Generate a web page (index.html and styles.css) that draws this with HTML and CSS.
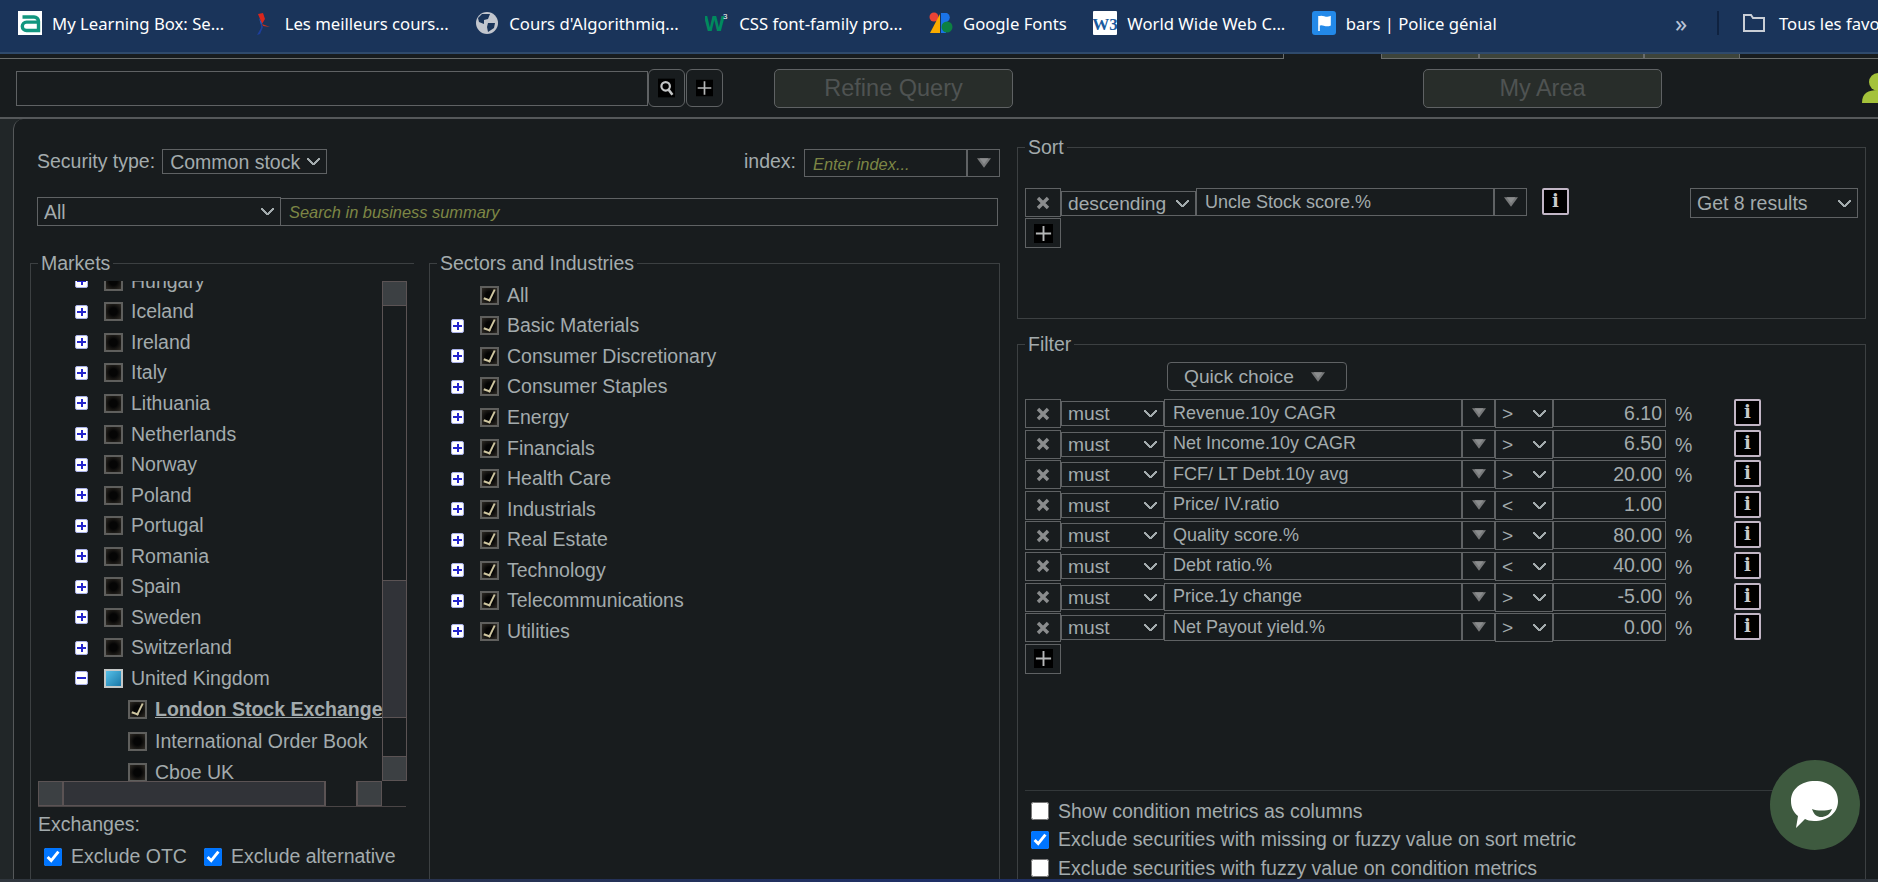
FILE: index.html
```html
<!DOCTYPE html>
<html lang="en">
<head>
    <meta charset="UTF-8">
    <title>Stock screener</title>
    <link rel="stylesheet" href="styles.css">
</head>
<body>
    <svg class="defs" width="0" height="0">
        <symbol id="arrow" viewBox="0 0 16 11"><polygon points="0,0 16,0 8,11" fill="#77797a"/><polygon points="3,0 13,0 8,7" fill="#8b8d8e"/></symbol>
        <symbol id="cross" viewBox="0 0 14 14"><path d="M2 2 L12 12 M12 2 L2 12" stroke="#8a8c8d" stroke-width="3.4" fill="none"/></symbol>
        <symbol id="plus" viewBox="0 0 20 20"><rect width="20" height="20" fill="#000"/><path d="M10 2 V18 M2 10 H18" stroke="#b5b7b8" stroke-width="2" fill="none"/></symbol>
    </svg>

    <div class="bookmarks">
        <a class="bm"><svg class="fav" viewBox="0 0 24 24"><rect width="24" height="24" fill="#fff"/><path d="M4.5 6 H16 a4.5 4.5 0 0 1 4.5 4.5 V19.5 H8.5 a4.2 4.2 0 0 1 0-8.4 H20" stroke="#12967f" stroke-width="3.4" fill="none"/></svg>My Learning Box: Se...</a>
        <a class="bm"><svg class="fav" viewBox="0 0 24 24"><path d="M7 3 L12 2 L14 8 L11 13 Z" fill="#d8261c"/><path d="M11 13 L19 16 L12 15 Z" fill="#c8301e"/><path d="M10 12 L12 16 L9 23 L6 24 L10 17 Z" fill="#1d3f9c"/><path d="M8 7 L11 12 L10 14 Z" fill="#2c5bc0"/></svg>Les meilleurs cours...</a>
        <a class="bm"><svg class="fav" viewBox="0 0 24 24"><circle cx="12" cy="12" r="11" fill="#c2c6ce"/><path d="M7 3 L15 3 L13 8 L9 9 L9 13 L4 11 L3 7 Z M13 12 L20 12 L19 17 L13 21 L12 16 Z" fill="#1a3459"/></svg>Cours d'Algorithmiq...</a>
        <a class="bm"><svg class="fav" viewBox="0 0 24 24"><text class="w3s" x="-1" y="20">W</text><text class="w3s-sup" x="18" y="8">3</text></svg>CSS font-family pro...</a>
        <a class="bm"><svg class="fav" viewBox="0 0 24 24"><circle cx="5" cy="6" r="4.5" fill="#ea4335"/><polygon points="1,22 11,3 11,22" fill="#f9ab00"/><rect x="12" y="2" width="5" height="20" fill="#1a73e8"/><path d="M12 2 h6 a5 5 0 0 1 0 9 h-6 Z" fill="#1a73e8"/><circle cx="18" cy="16" r="5.5" fill="#0d8043"/></svg>Google Fonts</a>
        <a class="bm"><svg class="fav" viewBox="0 0 24 24"><rect width="24" height="24" rx="1" fill="#fff"/><text class="w3c" x="12" y="19" text-anchor="middle">W3</text></svg>World Wide Web C...</a>
        <a class="bm"><svg class="fav" viewBox="0 0 24 24"><rect width="24" height="24" rx="3" fill="#2389e9"/><path d="M7 5 V20 M7 6 C11 4 13 8 18 6 V14 C13 16 11 12 7 14 Z" stroke="#fff" stroke-width="1.6" fill="#fff"/></svg>bars | Police génial</a>
        <div class="bm-end">
            <span class="more">»</span>
            <span class="bm-sep"></span>
            <svg class="folder" viewBox="0 0 24 22"><path d="M2 19 V3 H9 L11 6 H22 V19 Z" fill="none" stroke="#c9ced6" stroke-width="2"/></svg>
            <span class="all">Tous les favoris</span>
        </div>
    </div>

    <div class="tabs">
        <span class="tab-line"></span>
        <span class="tab-active"></span>
        <span class="tab tab-a"></span>
        <span class="tab tab-b"></span>
        <span class="tab tab-c"></span>
        <span class="tab-rest"></span>
    </div>

    <div class="header">
        <input class="top-search" type="text">
        <button class="icon-btn"><svg class="glyph" viewBox="0 0 20 22"><rect width="20" height="22" fill="#000"/><circle cx="9" cy="9" r="5" fill="none" stroke="#c3c5c6" stroke-width="2.6"/><path d="M12.5 13 L17 19" stroke="#c3c5c6" stroke-width="3"/></svg></button>
        <button class="icon-btn"><svg class="glyph" viewBox="0 0 20 20"><use href="#plus"/></svg></button>
        <button class="big-btn refine">Refine Query</button>
        <button class="big-btn area">My Area</button>
        <svg class="user" viewBox="0 0 40 30"><circle cx="16" cy="9" r="9" fill="#a4c23a"/><path d="M0 30 C0 20 6 17 16 17 C26 17 32 20 32 30 Z" fill="#a4c23a"/></svg>
    </div>

    <div class="main">
        <div class="panel">
            <div class="left">
                <div class="type-row">
                    <label>Security type:</label>
                    <select class="sel type-sel"><option>Common stock</option></select>
                    <label class="index-label">index:</label>
                    <input class="field index-field" type="text" placeholder="Enter index...">
                    <button class="drop"><svg class="tri"><use href="#arrow"/></svg></button>
                </div>
                <div class="summary-row">
                    <select class="sel all-sel"><option>All</option></select>
                    <input class="field summary-field" type="text" placeholder="Search in business summary">
                </div>
                <div class="columns">
                    <fieldset class="markets">
                        <legend>Markets</legend>
                        <div class="tree-box">
                            <div class="tree-view">
                                <ul class="tree">
                                    <li class="node"><span class="pm"></span><span class="cb"></span>Hungary</li>
                                    <li class="node"><span class="pm"></span><span class="cb"></span>Iceland</li>
                                    <li class="node"><span class="pm"></span><span class="cb"></span>Ireland</li>
                                    <li class="node"><span class="pm"></span><span class="cb"></span>Italy</li>
                                    <li class="node"><span class="pm"></span><span class="cb"></span>Lithuania</li>
                                    <li class="node"><span class="pm"></span><span class="cb"></span>Netherlands</li>
                                    <li class="node"><span class="pm"></span><span class="cb"></span>Norway</li>
                                    <li class="node"><span class="pm"></span><span class="cb"></span>Poland</li>
                                    <li class="node"><span class="pm"></span><span class="cb"></span>Portugal</li>
                                    <li class="node"><span class="pm"></span><span class="cb"></span>Romania</li>
                                    <li class="node"><span class="pm"></span><span class="cb"></span>Spain</li>
                                    <li class="node"><span class="pm"></span><span class="cb"></span>Sweden</li>
                                    <li class="node"><span class="pm"></span><span class="cb"></span>Switzerland</li>
                                    <li class="node"><span class="pm minus"></span><span class="cb part"></span>United Kingdom</li>
                                    <li class="node child"><span class="cb on"></span><b>London Stock Exchange</b></li>
                                    <li class="node child"><span class="cb"></span>International Order Book</li>
                                    <li class="node child"><span class="cb"></span>Cboe UK</li>
                                </ul>
                            </div>
                            <div class="vbar">
                                <span class="sb-btn sb-up"></span>
                                <span class="sb-track sb-t1"></span>
                                <span class="sb-thumb sb-t2"></span>
                                <span class="sb-track sb-t3"></span>
                                <span class="sb-btn sb-down"></span>
                            </div>
                        </div>
                        <div class="hbar">
                            <span class="sb-btn sb-left"></span>
                            <span class="sb-thumb sb-h1"></span>
                            <span class="sb-track sb-h2"></span>
                            <span class="sb-btn sb-right"></span>
                        </div>
                        <div class="exchanges">Exchanges:</div>
                        <div class="exclude">
                            <label class="chk"><input type="checkbox" checked>Exclude OTC</label>
                            <label class="chk"><input type="checkbox" checked>Exclude alternative</label>
                        </div>
                        <div class="cut-line"></div>
                    </fieldset>
                    <fieldset class="sectors">
                        <legend>Sectors and Industries</legend>
                        <ul class="tree sector-tree">
                            <li class="node"><span class="pm none"></span><span class="cb on"></span>All</li>
                            <li class="node"><span class="pm"></span><span class="cb on"></span>Basic Materials</li>
                            <li class="node"><span class="pm"></span><span class="cb on"></span>Consumer Discretionary</li>
                            <li class="node"><span class="pm"></span><span class="cb on"></span>Consumer Staples</li>
                            <li class="node"><span class="pm"></span><span class="cb on"></span>Energy</li>
                            <li class="node"><span class="pm"></span><span class="cb on"></span>Financials</li>
                            <li class="node"><span class="pm"></span><span class="cb on"></span>Health Care</li>
                            <li class="node"><span class="pm"></span><span class="cb on"></span>Industrials</li>
                            <li class="node"><span class="pm"></span><span class="cb on"></span>Real Estate</li>
                            <li class="node"><span class="pm"></span><span class="cb on"></span>Technology</li>
                            <li class="node"><span class="pm"></span><span class="cb on"></span>Telecommunications</li>
                            <li class="node"><span class="pm"></span><span class="cb on"></span>Utilities</li>
                        </ul>
                    </fieldset>
                </div>
            </div>

            <div class="right">
                <fieldset class="sort">
                    <legend>Sort</legend>
                    <div class="sort-row">
                        <button class="row-btn"><svg class="x"><use href="#cross"/></svg></button>
                        <select class="sel dir-sel"><option>descending</option></select>
                        <input class="metric sort-metric" type="text" value="Uncle Stock score.%">
                        <button class="drop"><svg class="tri"><use href="#arrow"/></svg></button>
                        <span class="info">i</span>
                        <select class="sel get-sel"><option>Get 8 results</option></select>
                    </div>
                    <button class="row-btn add"><svg class="add-glyph"><use href="#plus"/></svg></button>
                </fieldset>

                <fieldset class="filter">
                    <legend>Filter</legend>
                    <button class="quick">Quick choice<svg class="tri"><use href="#arrow"/></svg></button>
                    <div class="rules">
                        <div class="rule">
                            <button class="row-btn"><svg class="x"><use href="#cross"/></svg></button>
                            <select class="sel must"><option>must</option></select>
                            <input class="metric" type="text" value="Revenue.10y CAGR">
                            <button class="drop"><svg class="tri"><use href="#arrow"/></svg></button>
                            <select class="sel op"><option>&gt;</option></select>
                            <input class="val" type="text" value="6.10">
                            <span class="unit">%</span>
                            <span class="info">i</span>
                        </div>
                        <div class="rule">
                            <button class="row-btn"><svg class="x"><use href="#cross"/></svg></button>
                            <select class="sel must"><option>must</option></select>
                            <input class="metric" type="text" value="Net Income.10y CAGR">
                            <button class="drop"><svg class="tri"><use href="#arrow"/></svg></button>
                            <select class="sel op"><option>&gt;</option></select>
                            <input class="val" type="text" value="6.50">
                            <span class="unit">%</span>
                            <span class="info">i</span>
                        </div>
                        <div class="rule">
                            <button class="row-btn"><svg class="x"><use href="#cross"/></svg></button>
                            <select class="sel must"><option>must</option></select>
                            <input class="metric" type="text" value="FCF/ LT Debt.10y avg">
                            <button class="drop"><svg class="tri"><use href="#arrow"/></svg></button>
                            <select class="sel op"><option>&gt;</option></select>
                            <input class="val" type="text" value="20.00">
                            <span class="unit">%</span>
                            <span class="info">i</span>
                        </div>
                        <div class="rule">
                            <button class="row-btn"><svg class="x"><use href="#cross"/></svg></button>
                            <select class="sel must"><option>must</option></select>
                            <input class="metric" type="text" value="Price/ IV.ratio">
                            <button class="drop"><svg class="tri"><use href="#arrow"/></svg></button>
                            <select class="sel op"><option>&lt;</option></select>
                            <input class="val" type="text" value="1.00">
                            <span class="unit"></span>
                            <span class="info">i</span>
                        </div>
                        <div class="rule">
                            <button class="row-btn"><svg class="x"><use href="#cross"/></svg></button>
                            <select class="sel must"><option>must</option></select>
                            <input class="metric" type="text" value="Quality score.%">
                            <button class="drop"><svg class="tri"><use href="#arrow"/></svg></button>
                            <select class="sel op"><option>&gt;</option></select>
                            <input class="val" type="text" value="80.00">
                            <span class="unit">%</span>
                            <span class="info">i</span>
                        </div>
                        <div class="rule">
                            <button class="row-btn"><svg class="x"><use href="#cross"/></svg></button>
                            <select class="sel must"><option>must</option></select>
                            <input class="metric" type="text" value="Debt ratio.%">
                            <button class="drop"><svg class="tri"><use href="#arrow"/></svg></button>
                            <select class="sel op"><option>&lt;</option></select>
                            <input class="val" type="text" value="40.00">
                            <span class="unit">%</span>
                            <span class="info">i</span>
                        </div>
                        <div class="rule">
                            <button class="row-btn"><svg class="x"><use href="#cross"/></svg></button>
                            <select class="sel must"><option>must</option></select>
                            <input class="metric" type="text" value="Price.1y change">
                            <button class="drop"><svg class="tri"><use href="#arrow"/></svg></button>
                            <select class="sel op"><option>&gt;</option></select>
                            <input class="val" type="text" value="-5.00">
                            <span class="unit">%</span>
                            <span class="info">i</span>
                        </div>
                        <div class="rule">
                            <button class="row-btn"><svg class="x"><use href="#cross"/></svg></button>
                            <select class="sel must"><option>must</option></select>
                            <input class="metric" type="text" value="Net Payout yield.%">
                            <button class="drop"><svg class="tri"><use href="#arrow"/></svg></button>
                            <select class="sel op"><option>&gt;</option></select>
                            <input class="val" type="text" value="0.00">
                            <span class="unit">%</span>
                            <span class="info">i</span>
                        </div>
                    </div>
                    <button class="row-btn add"><svg class="add-glyph"><use href="#plus"/></svg></button>
                    <div class="options">
                        <label class="chk"><input type="checkbox">Show condition metrics as columns</label>
                        <label class="chk"><input type="checkbox" checked>Exclude securities with missing or fuzzy value on sort metric</label>
                        <label class="chk"><input type="checkbox">Exclude securities with fuzzy value on condition metrics</label>
                    </div>
                </fieldset>
            </div>
        </div>
    </div>
    <div class="taskbar"></div>

    <div class="chat">
        <svg viewBox="0 0 50 50" class="chat-icon"><path d="M25 1 C39 1 48 9 48 21 C48 33 38 41 24 41 C20 41 17 40 15 39 L6 48 L8 36 C3 32 1 27 1 21 C1 9 11 1 25 1 Z" fill="#fff"/><path d="M22 29 C27 31 36 31 42 29 C40 35 35 37 31 37 C27 37 24 35 22 29 Z" fill="#3e5a3f"/></svg>
    </div>
</body>
</html>
```

FILE: styles.css
```css
* { box-sizing: border-box; }
html, body { margin: 0; height: 882px; overflow: hidden; }
body { background: #181c1e; color: #a3abad; font-family: "Liberation Sans", Arial, sans-serif; font-size: 19.5px; position: relative; }
.defs { display: block; height: 0; }
ul { list-style: none; margin: 0; padding: 0; }
button { font-family: inherit; padding: 0; cursor: pointer; }

/* browser bookmarks */
.bookmarks { height: 52px; background: #1a345a; display: flex; align-items: center; gap: 26.5px; padding: 0 0 6px 18px; color: #fff; font-family: "Noto Sans", sans-serif; font-size: 16.7px; white-space: nowrap; }
.bm { display: flex; align-items: center; gap: 10px; }
.fav { width: 24px; height: 24px; flex: none; }
.w3s { font: bold 22px "Liberation Sans", sans-serif; fill: #008a5e; }
.w3s-sup { font: 8px "Liberation Sans", sans-serif; fill: #fff; }
.w3c { font: bold 17px "Liberation Serif", serif; fill: #1a5a9c; }
.bm-end { margin-left: auto; display: flex; align-items: center; width: 203px; overflow: hidden; flex: none; }
.bm-end > * { flex: none; }
.more { color: #b9c3d6; font-size: 24px; width: 42px; line-height: 20px; }
.bm-sep { width: 2px; height: 24px; background: #0f2240; margin-right: 23px; }
.folder { width: 24px; height: 22px; margin-right: 13px; }

/* tab strip */
.tabs { height: 7px; display: flex; background: #181c1e; border-top: 2px solid #2f4a6c; }
.tab-line { width: 1284px; border-bottom: 1px solid #6a6d6c; border-right: 1px solid #6a6d6c; }
.tab-active { width: 97px; }
.tab { background: #3e443a; border: 1px solid #6a6d6c; border-top: none; }
.tab-a { width: 98px; }
.tab-b { width: 165px; }
.tab-c { width: 96px; }
.tab-rest { flex: 1; border-bottom: 1px solid #6a6d6c; }

/* search header */
.header { height: 60px; display: flex; align-items: center; padding-left: 16px; border-bottom: 2px solid #55585a; overflow: hidden; }
.header > * { flex: none; }
.top-search { width: 632px; height: 35px; background: #181c1e; border: 1px solid #5f6264; }
.icon-btn { width: 37px; height: 38px; margin-right: 1px; background: #181c1e; border: 1px solid #5f6264; border-radius: 6px; display: flex; align-items: center; justify-content: center; }
.glyph { width: 17px; height: 20px; }
.big-btn { height: 39px; width: 239px; background: #282d2a; border: 1px solid #5f6264; border-radius: 5px; color: #4f5352; font-size: 23.5px; }
.refine { margin-left: 50px; }
.area { margin-left: 410px; }
.user { width: 40px; height: 30px; margin-left: 200px; }

/* page panel */
.main { height: 760px; background: #212628; padding-left: 13px; overflow: hidden; }
.panel { height: 800px; background: #181c1e; border-left: 1px solid #55585a; border-top-left-radius: 10px; display: flex; }
.left { width: 987px; padding: 30px 0 0 23px; flex: none; }
.right { width: 849px; margin-left: 16px; padding-top: 17px; flex: none; }
.taskbar { height: 3px; background: linear-gradient(90deg, #30363d 0, #1e2f66 50%, #30363d 100%); }

/* selects with the thin chevron of the original */
.sel { appearance: none; color: #a3abad; border: 1px solid #5f6264; font: inherit; padding: 0 0 0 6px; border-radius: 0; background-color: #181c1e;
    background-image: linear-gradient(45deg, transparent 42%, #a3abad 42%, #a3abad 62%, transparent 62%), linear-gradient(-45deg, transparent 42%, #a3abad 42%, #a3abad 62%, transparent 62%);
    background-size: 7px 7px, 7px 7px;
    background-position: right 12px center, right 6px center;
    background-repeat: no-repeat; }
.field { background: #181c1e; color: #a3abad; border: 1px solid #5f6264; font: inherit; }
.field::placeholder { color: #7d8645; font-style: italic; font-size: 16.4px; opacity: 1; }

.type-row { display: flex; align-items: center; height: 28px; width: 963px; }
.type-row label { margin-right: 7px; margin-top: -3px; }
.type-sel { width: 165px; height: 25px; flex: none; margin-top: -3px; padding-left: 7px; }
.type-row .index-label { margin-left: auto; margin-right: 8px; }
.index-field { width: 163px; height: 28px; padding-left: 8px; flex: none; }
.drop { width: 33px; height: 28px; flex: none; background: #181c1e; border: 1px solid #5f6264; display: flex; align-items: center; justify-content: center; }
.tri { width: 14px; height: 10px; flex: none; }
.summary-row { display: flex; align-items: center; margin-top: 20px; width: 961px; }
.all-sel { width: 244px; height: 29px; flex: none; }
.summary-field { flex: 1; height: 28px; padding-left: 8px; border-left: none; }

/* market and sector groups */
fieldset { margin: 0; padding: 0; min-width: 0; border: 1px solid #3c4042; }
legend { padding: 0 3px; line-height: 22px; }
.columns { display: flex; gap: 15px; margin: 26px 0 0 -7px; height: 640px; }
.markets { width: 384px; padding-left: 7px; border-right: none; border-bottom: none; flex: none; }
.sectors { width: 571px; padding-left: 7px; flex: none; }
.tree-box { display: flex; margin-top: 7px; width: 368px; height: 500px; }
.tree-view { width: 344px; overflow: hidden; flex: none; }
.tree { margin-top: -15px; }
.node { height: 30.55px; display: flex; align-items: center; white-space: nowrap; padding-left: 37px; }
.child { height: 31.6px; padding-left: 90px; }
.child b { text-decoration: underline; }
.sector-tree { margin-top: 6px; }
.sector-tree .node { padding-left: 14px; }
.pm { width: 13px; height: 14px; margin-right: 16px; flex: none; border: 1px solid #aab2ea; border-radius: 2px; background: linear-gradient(#2424cc, #2424cc) center / 9px 2px no-repeat, linear-gradient(#2424cc, #2424cc) center / 2px 8px no-repeat, #fff; }
.pm.minus { background: linear-gradient(#2424cc, #2424cc) center / 9px 2px no-repeat, #fff; }
.pm.none { visibility: hidden; }
.cb { width: 19px; height: 19px; margin-right: 8px; flex: none; border: 2px solid #5f5f5d; background: radial-gradient(circle, #050505 35%, #302c26 100%); display: flex; align-items: center; justify-content: center; }
.cb.on::after { content: ""; width: 5px; height: 11px; margin-top: -2px; border-right: 2px solid #cfc6a0; border-bottom: 2px solid #cfc6a0; transform: rotate(20deg) skewX(-6deg); }
.cb.part { border: 2px solid #c4c8c8; background: linear-gradient(135deg, #56c0e8, #1a78a8); }

/* fake scrollbars of the tree */
.vbar { width: 25px; height: 500px; display: flex; flex-direction: column; flex: none; }
.hbar { width: 368px; height: 26px; display: flex; border-bottom: 1px solid #4a4546; }
.sb-btn { background: #3c4043; border: 1px solid #5b5354; flex: none; }
.sb-thumb { background: #313338; border: 1px solid #5b5354; flex: none; }
.sb-track { border: 1px solid #5b5354; border-width: 0 1px; flex: none; }
.sb-up { height: 25px; }
.sb-t1 { height: 274px; }
.sb-t2 { height: 138px; }
.sb-t3 { height: 38px; }
.sb-down { height: 25px; }
.sb-left { width: 25px; }
.sb-h1 { width: 262px; }
.sb-h2 { width: 32px; }
.sb-right { width: 25px; }

.exchanges { line-height: 22px; margin-top: 6px; }
.exclude { display: flex; align-items: center; gap: 17px; margin: 10px 0 0 6px; }
.chk { display: flex; align-items: center; white-space: nowrap; }
.chk input { width: 18px; height: 18px; margin: 0 9px 0 0; flex: none; }
.cut-line { width: 231px; height: 1px; background: #5f6264; margin-top: 11px; }

/* sort and filter */
.sort { height: 183px; padding: 30px 7px 0 7px; }
.sort-row { display: flex; align-items: flex-start; height: 30px; }
.row-btn { width: 36px; height: 29px; flex: none; background: #181c1e; border: 1px solid #5f6264; display: flex; align-items: center; justify-content: center; }
.x { width: 14px; height: 14px; }
.add { height: 30px; }
.add-glyph { width: 19px; height: 19px; }
.dir-sel { width: 135px; height: 25px; margin-top: 3px; flex: none; font-size: 19.2px; }
.metric { width: 298px; height: 28px; flex: none; background: #181c1e; color: #a3abad; border: 1px solid #5f6264; font: 18px "Liberation Sans", sans-serif; padding: 0 8px; }
.info { width: 27px; height: 27px; margin-left: 15px; flex: none; background: #000; border: 2px solid #c2b6c6; border-radius: 2px; color: #c9cbcc; font: bold 18px/22px "DejaVu Serif", serif; text-align: center; }
.get-sel { width: 168px; height: 30px; margin-left: auto; flex: none; }

.filter { margin-top: 14px; height: 600px; padding: 0 7px; }
.quick { display: flex; align-items: center; gap: 17px; width: 180px; height: 29px; margin: 7px 0 8px 142px; padding-left: 16px; background: #181c1e; border: 1px solid #5f6264; border-radius: 4px; color: #a3abad; font-size: 19.2px; }
.rule { height: 30.6px; display: flex; align-items: flex-start; }
.must { width: 103px; height: 25px; margin-top: 2px; flex: none; font-size: 19.2px; }
.op { width: 58px; height: 29px; flex: none; font-size: 19.2px; }
.val { width: 113px; height: 28px; flex: none; background: #181c1e; color: #a3abad; border: 1px solid #5f6264; font: 19.5px "Liberation Sans", sans-serif; text-align: right; padding: 0 3px 0 4px; }
.unit { width: 68px; padding-left: 9px; line-height: 30px; flex: none; }
.rule .info { margin-left: 0; }
.options { margin-top: 116px; border-top: 1px solid #33383a; padding-top: 6px; }
.options .chk { height: 28.6px; margin-left: 6px; }

/* chat bubble */
.chat { position: absolute; left: 1770px; top: 760px; width: 90px; height: 90px; border-radius: 50%; background: #3e5a3f; display: flex; align-items: center; justify-content: center; }
.chat-icon { width: 50px; height: 50px; }
```
